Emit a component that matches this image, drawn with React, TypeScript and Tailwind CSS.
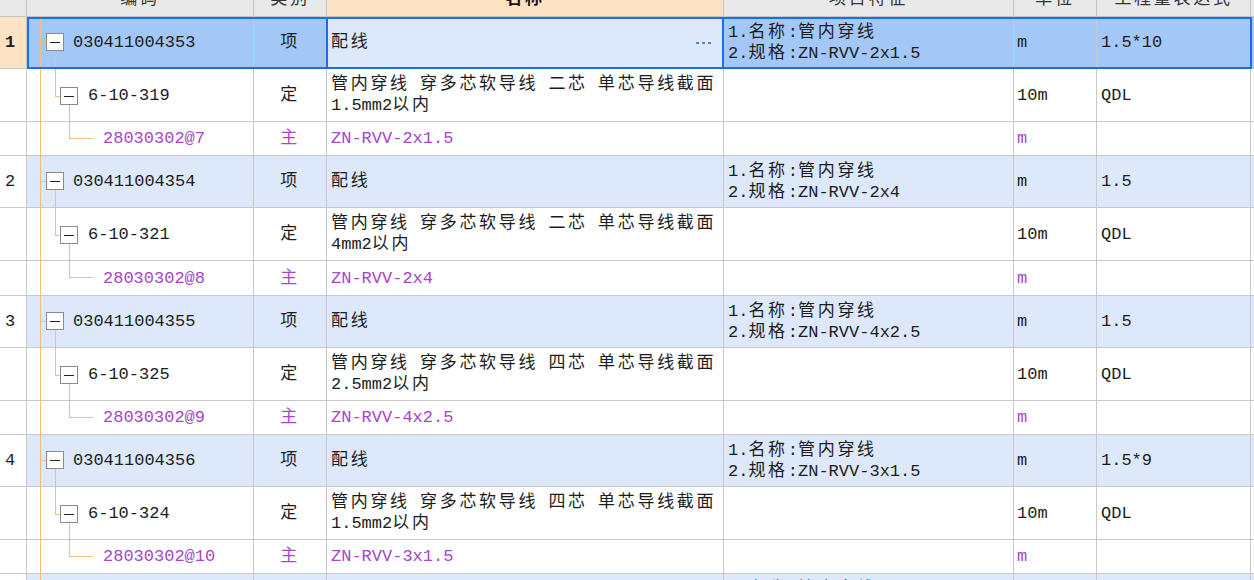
import React from "react";

const GRID = "grid grid-cols-[27px_227px_73px_397px_290px_83px_154px_40px]";
const B = "border-r border-b border-[#c9c9c9]";
const LN = "absolute bg-[#f3bd7b]";
const PURPLE = "text-[#a845c8]";

function T({ s }: { s: string }) {
  const parts = s.split(/([\u2e80-\u9fff\uff00-\uffef\u3000-\u303f]+)/);
  return (
    <>
      {parts.map((p, i) =>
        i % 2 ? (
          <span key={i} className="tracking-[2.7px]">
            {p}
          </span>
        ) : (
          <React.Fragment key={i}>{p}</React.Fragment>
        )
      )}
    </>
  );
}

function Box({ cls }: { cls: string }) {
  return (
    <div
      className={`absolute w-[18px] h-[18px] border border-[#8a8a8a] bg-white flex items-center justify-center ${cls}`}
    >
      <div className="w-[10px] h-px bg-[#222]" />
    </div>
  );
}

type Item = {
  no: string;
  code: string;
  spec: string;
  qty: string;
  quota: string;
  core: string;
  size: string;
  mat: string;
};

const items: Item[] = [
  { no: "1", code: "030411004353", spec: "ZN-RVV-2x1.5", qty: "1.5*10", quota: "6-10-319", core: "二芯", size: "1.5mm2以内", mat: "28030302@7" },
  { no: "2", code: "030411004354", spec: "ZN-RVV-2x4", qty: "1.5", quota: "6-10-321", core: "二芯", size: "4mm2以内", mat: "28030302@8" },
  { no: "3", code: "030411004355", spec: "ZN-RVV-4x2.5", qty: "1.5", quota: "6-10-325", core: "四芯", size: "2.5mm2以内", mat: "28030302@9" },
  { no: "4", code: "030411004356", spec: "ZN-RVV-3x1.5", qty: "1.5*9", quota: "6-10-324", core: "四芯", size: "1.5mm2以内", mat: "28030302@10" },
];

function ItemRow({ it, selected }: { it: Item; selected?: boolean }) {
  return (
    <div className={`${GRID} relative h-[52px] ${selected ? "bg-[#a3c8f8]" : "bg-[#dde9fb]"}`}>
      <div className={`${B} flex items-center pl-[5px] ${selected ? "bg-[#fde3c4] font-bold" : "bg-white"}`}>{it.no}</div>
      <div className={`${B} relative flex items-center pl-[46px]`}>
        <div className={`${LN} left-[13px] top-0 bottom-[-1px] w-px`} />
        <div className={`${LN} left-[13px] top-[25px] w-[6px] h-px`} />
        <div className={`${LN} left-[28px] top-[34px] bottom-[-1px] w-px`} />
        <Box cls="left-[19px] top-[16px]" />
        <T s={it.code} />
      </div>
      <div className={`${B} flex items-center justify-center`}>
        <T s="项" />
      </div>
      <div className={`${B} relative flex items-center pl-[4px] ${selected ? "bg-[#dde9fb]" : ""}`}>
        <T s="配线" />
        {selected && (
          <>
            <div className="absolute top-0 bottom-0 left-[-1px] right-[-1px] border-x-2 border-[#1a6fe6]" />
            <div className="absolute right-[12px] top-[25px] flex gap-[3px]">
              <div className="w-[3px] h-[2px] bg-[#4a86d8]" />
              <div className="w-[3px] h-[2px] bg-[#4a86d8]" />
              <div className="w-[3px] h-[2px] bg-[#4a86d8]" />
            </div>
          </>
        )}
      </div>
      <div className={`${B} flex flex-col justify-center pl-[4px]`}>
        <div>
          <T s="1.名称:管内穿线" />
        </div>
        <div>
          <T s={"2.规格:" + it.spec} />
        </div>
      </div>
      <div className={`${B} flex items-center pl-[3px]`}>m</div>
      <div className={`${B} flex items-center pl-[4px]`}>{it.qty}</div>
      <div className={B} />
      {selected && (
        <div className="absolute left-[27px] top-0 w-[1225px] h-[52px] border-2 border-[#1a6fe6] pointer-events-none" />
      )}
    </div>
  );
}

function QuotaRow({ it }: { it: Item }) {
  return (
    <div className={`${GRID} h-[53px] bg-white`}>
      <div className={B} />
      <div className={`${B} relative flex items-center pl-[61px]`}>
        <div className={`${LN} left-[13px] top-0 bottom-[-1px] w-px`} />
        <div className={`${LN} left-[28px] top-0 h-[27px] w-px`} />
        <div className={`${LN} left-[28px] top-[27px] w-[5px] h-px`} />
        <div className={`${LN} left-[42px] top-[36px] bottom-[-1px] w-px`} />
        <Box cls="left-[33px] top-[18px]" />
        <T s={it.quota} />
      </div>
      <div className={`${B} flex items-center justify-center`}>
        <T s="定" />
      </div>
      <div className={`${B} flex flex-col justify-center pl-[4px]`}>
        <div>
          <T s={`管内穿线 穿多芯软导线 ${it.core} 单芯导线截面`} />
        </div>
        <div>
          <T s={it.size} />
        </div>
      </div>
      <div className={B} />
      <div className={`${B} flex items-center pl-[3px]`}>10m</div>
      <div className={`${B} flex items-center pl-[4px]`}>QDL</div>
      <div className={B} />
    </div>
  );
}

function MatRow({ it, tall }: { it: Item; tall?: boolean }) {
  return (
    <div className={`${GRID} ${tall ? "h-[35px]" : "h-[34px]"} bg-white ${PURPLE}`}>
      <div className={B} />
      <div className={`${B} relative flex items-center pl-[76px]`}>
        <div className={`${LN} left-[13px] top-0 bottom-[-1px] w-px`} />
        <div className={`${LN} left-[42px] top-0 h-[16px] w-px`} />
        <div className={`${LN} left-[42px] top-[16px] w-[24px] h-px`} />
        <T s={it.mat} />
      </div>
      <div className={`${B} flex items-center justify-center`}>
        <T s="主" />
      </div>
      <div className={`${B} flex items-center pl-[4px]`}>{it.spec}</div>
      <div className={B} />
      <div className={`${B} flex items-center pl-[3px]`}>m</div>
      <div className={B} />
      <div className={B} />
    </div>
  );
}

export default function App() {
  const H = "border-r border-b border-[#c4c4c4] flex items-center justify-center";
  return (
    <div className="w-[1254px] h-[580px] overflow-hidden bg-white text-[17px] leading-[21px] text-[#1c1c1c] font-['Liberation_Mono','Noto_Sans_CJK_SC',monospace]">
      <div className={`${GRID} h-[34px] -mt-[17px] bg-[#e9e9e9] text-[#333]`}>
        <div className={H} />
        <div className={H}>
          <T s="编码" />
        </div>
        <div className={H}>
          <T s="类别" />
        </div>
        <div className={`${H} bg-[#fde3c4] font-bold text-[#111]`}>
          <T s="名称" />
        </div>
        <div className={H}>
          <T s="项目特征" />
        </div>
        <div className={H}>
          <T s="单位" />
        </div>
        <div className={H}>
          <T s="工程量表达式" />
        </div>
        <div className={H} />
      </div>
      {items.map((it, i) => (
        <React.Fragment key={it.no}>
          <ItemRow it={it} selected={i === 0} />
          <QuotaRow it={it} />
          <MatRow it={it} tall={i === 1} />
        </React.Fragment>
      ))}
      <ItemRow
        it={{ no: "5", code: "030411004357", spec: "ZN-RVV-4x1.5", qty: "1.5", quota: "", core: "", size: "", mat: "" }}
      />
    </div>
  );
}
